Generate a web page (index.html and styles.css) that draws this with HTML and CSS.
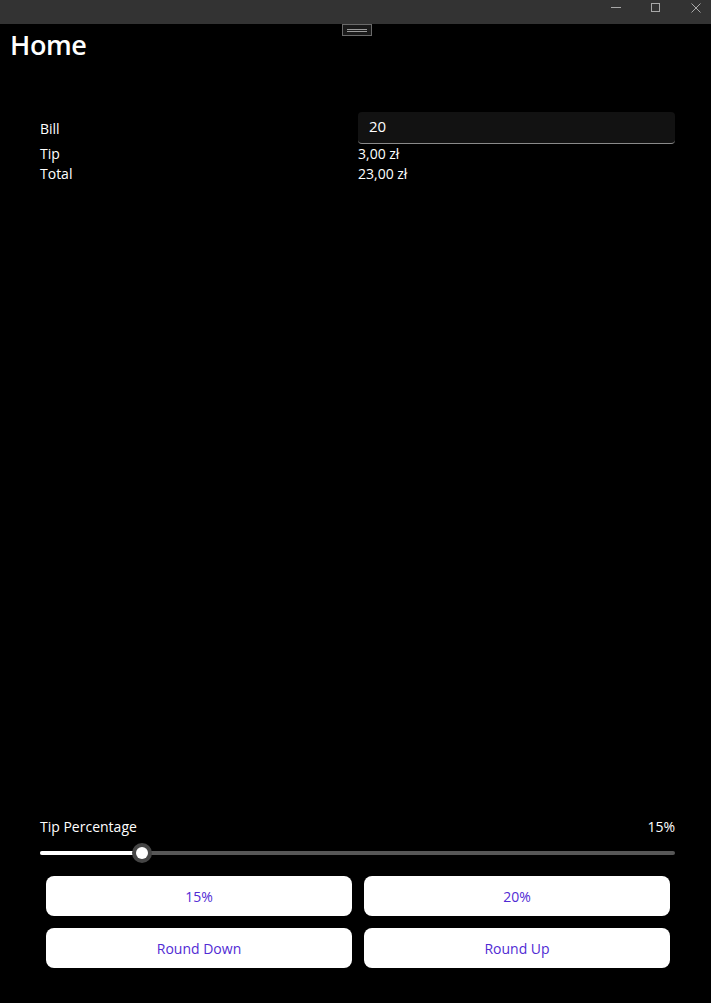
FILE: index.html
```html
<!DOCTYPE html>
<html lang="en">
<head>
<meta charset="utf-8">
<title>Home</title>
<link rel="stylesheet" href="styles.css">
</head>
<body>
<div class="window">
  <header class="titlebar">
    <div class="caption-buttons">
      <svg width="10" height="10" viewBox="0 0 10 10"><line x1="0" y1="4.5" x2="10" y2="4.5" stroke="#a8a8a8" stroke-width="1"/></svg>
      <svg width="10" height="10" viewBox="0 0 10 10"><rect x="0.5" y="0.5" width="8" height="8" fill="none" stroke="#a8a8a8" stroke-width="1"/></svg>
      <svg width="10" height="10" viewBox="0 0 10 10"><path d="M0.5 0.5 L9.5 9.5 M9.5 0.5 L0.5 9.5" stroke="#a8a8a8" stroke-width="1"/></svg>
    </div>
  </header>
  <div class="drag-handle"><span></span><span></span></div>

  <main class="page">
    <h1 class="page-title">Home</h1>

    <section class="calc">
      <div class="calc-row bill-row">
        <span class="label">Bill</span>
        <div class="entry">20</div>
      </div>
      <div class="calc-row">
        <span class="label">Tip</span>
        <span class="value">3,00 zł</span>
      </div>
      <div class="calc-row">
        <span class="label">Total</span>
        <span class="value">23,00 zł</span>
      </div>
    </section>

    <div class="spacer"></div>

    <section class="controls">
      <div class="pct-row">
        <span class="label">Tip Percentage</span>
        <span class="label">15%</span>
      </div>
      <div class="slider">
        <div class="track"><div class="fill" style="width: 102px"></div></div>
        <div class="thumb" style="left: 92px"><span></span></div>
      </div>
      <div class="buttons">
        <button class="btn">15%</button>
        <button class="btn">20%</button>
        <button class="btn">Round Down</button>
        <button class="btn">Round Up</button>
      </div>
    </section>
  </main>
</div>
</body>
</html>
```

FILE: styles.css
```css
* { box-sizing: border-box; }

html, body {
  margin: 0;
  padding: 0;
  background: #000;
  height: 100%;
}

body {
  font-family: "Open Sans", "Noto Sans", sans-serif;
  color: #fff;
}

.window {
  position: relative;
  display: flex;
  flex-direction: column;
  height: 1003px;
}

.titlebar {
  height: 24px;
  background: #333333;
  display: flex;
  justify-content: flex-end;
  flex-shrink: 0;
}

.caption-buttons {
  display: flex;
  align-items: flex-start;
  gap: 30px;
  padding: 3px 10px 0 0;
}

.caption-buttons svg { display: block; }

.drag-handle {
  position: absolute;
  left: 342px;
  top: 24px;
  width: 30px;
  height: 12px;
  border: 1px solid #6a6a6a;
  background: #1a1a1a;
  display: flex;
  flex-direction: column;
  align-items: center;
  justify-content: center;
  gap: 1px;
}

.drag-handle span {
  display: block;
  width: 20px;
  height: 1px;
  background: #9a9a9a;
}

.page {
  flex: 1;
  display: flex;
  flex-direction: column;
  padding: 0 0 35px 0;
}

.page-title {
  margin: 3px 0 0 10px;
  font-family: "Open Sans", sans-serif;
  font-weight: 600;
  font-size: 27px;
  line-height: 36px;
  letter-spacing: -0.4px;
}

.calc {
  margin: 49px 36px 0 40px;
  display: flex;
  flex-direction: column;
}

.calc-row {
  display: grid;
  grid-template-columns: 318px 1fr;
  align-items: center;
  height: 20px;
}

.calc-row.bill-row {
  height: 32px;
}

.label, .value {
  font-size: 14px;
  line-height: 20px;
  color: #fff;
}

.bill-row .label { padding-top: 1px; }

.entry {
  height: 32px;
  background: #121212;
  border-radius: 4px;
  border-bottom: 1px solid #8a8a8a;
  font-size: 15px;
  line-height: 28px;
  padding-left: 11px;
  color: #fff;
}

.spacer { flex: 1; }

.controls {
  margin: 0 36px 0 40px;
  display: flex;
  flex-direction: column;
}

.pct-row {
  display: flex;
  justify-content: space-between;
  height: 20px;
  align-items: center;
}

.slider {
  position: relative;
  height: 32px;
  display: flex;
  align-items: center;
}

.track {
  width: 100%;
  height: 4px;
  border-radius: 2px;
  background: #575757;
}

.fill {
  height: 4px;
  border-radius: 2px;
  background: #fff;
}

.thumb {
  position: absolute;
  top: 6px;
  width: 20px;
  height: 20px;
  border-radius: 50%;
  background: #454545;
  display: flex;
  align-items: center;
  justify-content: center;
}

.thumb span {
  width: 12px;
  height: 12px;
  border-radius: 50%;
  background: #fff;
}

.buttons {
  margin: 7px 5px 0 6px;
  display: grid;
  grid-template-columns: 1fr 1fr;
  gap: 12px;
}

.btn {
  height: 40px;
  border: none;
  border-radius: 8px;
  background: #fff;
  color: #512bd4;
  font-family: "Open Sans", sans-serif;
  font-size: 14px;
  padding: 0;
}
```
